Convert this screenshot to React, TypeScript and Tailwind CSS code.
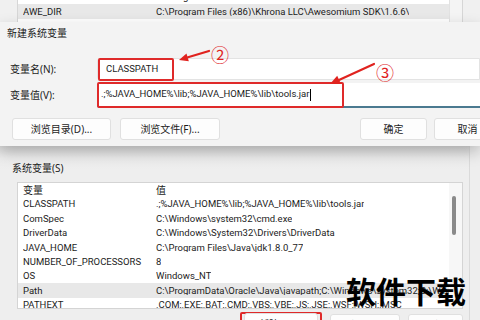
const userRows: [string, string][] = [
  ['ALLUSERSPROFILE', 'C:\\ProgramData'],
  ['AWE_DIR', 'C:\\Program Files (x86)\\Khrona LLC\\Awesomium SDK\\1.6.6\\'],
  ['ChocolateyInstall', 'C:\\ProgramData\\chocolatey'],
];

const sysRows: [string, string][] = [
  ['CLASSPATH', '.;%JAVA_HOME%\\lib;%JAVA_HOME%\\lib\\tools.jar'],
  ['ComSpec', 'C:\\Windows\\system32\\cmd.exe'],
  ['DriverData', 'C:\\Windows\\System32\\Drivers\\DriverData'],
  ['JAVA_HOME', 'C:\\Program Files\\Java\\jdk1.8.0_77'],
  ['NUMBER_OF_PROCESSORS', '8'],
  ['OS', 'Windows_NT'],
  ['Path', 'C:\\ProgramData\\Oracle\\Java\\javapath;C:\\Windows\\system32;C:\\Windows;C:\\Windows\\System32\\Wbem'],
  ['PATHEXT', '.COM;.EXE;.BAT;.CMD;.VBS;.VBE;.JS;.JSE;.WSF;.WSH;.MSC'],
];

function Row({ name, value, selected }: { name: string; value: string; selected?: boolean }) {
  return (
    <div className={`flex h-[14.4px] items-center whitespace-nowrap pl-[5px] font-['Roboto','Noto_Sans_CJK_SC',sans-serif] text-[9.5px] leading-none ${selected ? 'bg-[#e8e8e8]' : ''}`}>
      <span className="w-[133px] shrink-0 overflow-hidden">{name}</span>
      <span className="overflow-hidden">{value}</span>
    </div>
  );
}

function Button({ label, className = '' }: { label: string; className?: string }) {
  return (
    <div className={`flex h-[22px] shrink-0 items-center justify-center rounded-[3px] border border-[#e0e0e0] bg-[#fdfdfd] text-[10px] ${className}`}>
      {label}
    </div>
  );
}

export default function App() {
  return (
    <div className="relative h-[320px] w-[480px] overflow-hidden bg-[#eeeeee] font-['Noto_Sans','Noto_Sans_CJK_SC',sans-serif] text-[#1c1c1c]">
      {/* user variables list behind the dialog */}
      <div className="h-[22px] overflow-hidden bg-[#f0f0f0] pl-[17px] pr-[17px]">
        <div className="flex h-full border-l border-r border-[#d6d6d6] bg-white">
          <div className="-mt-[10px] flex-1">
            {userRows.map(([n, v], i) => (
              <Row key={n} name={n} value={v} selected={i === 1} />
            ))}
          </div>
          <div className="w-[13px] border-l border-[#e2e2e2] bg-[#f4f4f4]" />
        </div>
      </div>

      {/* new system variable dialog */}
      <div className="relative z-10 h-[124px] bg-[#f3f3f3] shadow-[0_6px_14px_rgba(0,0,0,0.22)]">
        <div className="flex h-[22px] items-center pl-[7px] text-[10px]">新建系统变量</div>

        <div className="mt-[14px] flex h-[22px] items-center">
          <div className="w-[97px] shrink-0 pl-[10px] text-[10px]">变量名(N):</div>
          <div className="flex h-full flex-1 items-center rounded-l-[3px] border border-[#e3e3e3] bg-white">
            <div className="flex h-[23px] w-[76px] items-center rounded-[2px] border-2 border-[#df2a2a] pl-[6px] font-['Roboto',sans-serif] text-[9.5px]">
              CLASSPATH
            </div>
          </div>
        </div>

        <div className="mt-[3px] flex h-[25px] items-center">
          <div className="w-[97px] shrink-0 pl-[10px] text-[10px]">变量值(V):</div>
          <div className="flex h-full flex-1 items-center rounded-l-[3px] border-b-2 border-[#4b7a90] bg-white">
            <div className="flex h-[26px] w-[247px] items-center whitespace-nowrap rounded-[2px] border-2 border-[#df2a2a] pl-[2px] font-['Roboto',sans-serif] text-[9.5px]">
              .;%JAVA_HOME%\lib;%JAVA_HOME%\lib\tools.jar
              <span className="ml-px h-[12px] w-px bg-black" />
            </div>
          </div>
        </div>

        <div className="mt-[10px] flex px-[12px]">
          <Button label="浏览目录(D)..." className="w-[99px]" />
          <Button label="浏览文件(F)..." className="ml-[9px] w-[100px]" />
          <Button label="确定" className="ml-[140px] w-[67px]" />
          <Button label="取消" className="ml-[7px] w-[67px]" />
        </div>
      </div>

      {/* system variables group */}
      <div className="mr-[10px] border-r border-[#dadada] bg-gradient-to-b from-[#dcdcdc] via-[#ececec] to-[#eeeeee] bg-[length:100%_24px] bg-no-repeat pt-[15px]">
        <div className="flex h-[14px] items-center pl-[12px] text-[10px]">系统变量(S)</div>
        <div className="ml-[17px] mt-[7px] flex h-[127px] w-[446px] border border-[#d4d4d4] bg-white">
          <div className="flex-1 overflow-hidden">
            <div className="flex h-[14px] items-center pl-[5px] text-[10px] leading-none">
              <span className="w-[133px]">变量</span>
              <span>值</span>
            </div>
            {sysRows.map(([n, v]) => (
              <Row key={n} name={n} value={v} selected={n === 'Path'} />
            ))}
          </div>
          <div className="w-[13px] shrink-0 bg-[#f7f7f7] pl-[3px] pt-[13px]">
            <div className="h-[39px] w-[4px] rounded-full bg-[#8a8a8a]" />
          </div>
        </div>
        <div className="mt-[3px] flex pl-[240px]">
          <div className="flex h-[24px] w-[82px] items-center justify-center rounded-[2px] border-2 border-[#df2a2a]">
            <Button label="新建(W)..." className="w-[74px]" />
          </div>
          <Button label="编辑(I)..." className="ml-[8px] mt-[2px] w-[70px]" />
          <Button label="删除(L)" className="ml-[8px] mt-[2px] w-[55px]" />
        </div>
      </div>

      {/* annotations */}
      <svg className="pointer-events-none absolute inset-0 z-20" width="480" height="320" viewBox="0 0 480 320">
        <line x1="209" y1="51" x2="188" y2="57.3" stroke="#e0231f" strokeWidth="2.2" strokeLinecap="round" />
        <polygon points="179,60 188.8,61.2 186.5,53.6" fill="#e0231f" />
        <line x1="374" y1="64" x2="339" y2="80" stroke="#e0231f" strokeWidth="2.2" strokeLinecap="round" />
        <polygon points="330,84 341,84 337.2,75.8" fill="#e0231f" />
      </svg>
      <span className="absolute left-[211px] top-[46px] z-20 text-[18px] leading-none text-[#e0231f]">②</span>
      <span className="absolute left-[376px] top-[64px] z-20 text-[18px] leading-none text-[#e0231f]">③</span>

      <div className="absolute left-[346px] top-[275px] z-20 font-['Noto_Sans_CJK_SC',sans-serif] text-[30px] font-bold leading-none text-black">
        软件下载
      </div>
    </div>
  );
}
